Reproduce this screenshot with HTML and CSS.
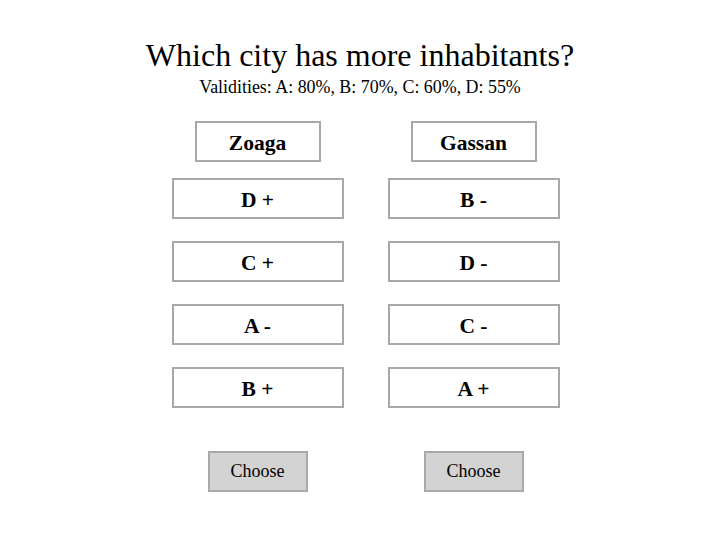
FILE: index.html
```html
<!DOCTYPE html>
<html>
<head>
<meta charset="utf-8">
<link rel="stylesheet" href="styles.css">
</head>
<body>
<div class="page">
  <h1 class="title">Which city has more inhabitants?</h1>
  <p class="subtitle">Validities: A: 80%, B: 70%, C: 60%, D: 55%</p>
  <div class="columns">
    <div class="col">
      <div class="name">Zoaga</div>
      <div class="cues">
        <div class="cue">D +</div>
        <div class="cue">C +</div>
        <div class="cue">A -</div>
        <div class="cue">B +</div>
      </div>
      <button class="choose">Choose</button>
    </div>
    <div class="col">
      <div class="name">Gassan</div>
      <div class="cues">
        <div class="cue">B -</div>
        <div class="cue">D -</div>
        <div class="cue">C -</div>
        <div class="cue">A +</div>
      </div>
      <button class="choose">Choose</button>
    </div>
  </div>
</div>
</body>
</html>
```
FILE: styles.css
```css
html, body {
  margin: 0;
  padding: 0;
  background: #ffffff;
}
body {
  font-family: "Liberation Serif", "Times New Roman", serif;
  color: #000;
}
.page {
  display: flex;
  flex-direction: column;
  align-items: center;
  padding-top: 37px;
}
.title {
  margin: 0;
  font-size: 32px;
  font-weight: normal;
  line-height: 37px;
}
.subtitle {
  margin: 3px 0 0 0;
  font-size: 17.9px;
  line-height: 20px;
}
.columns {
  display: flex;
  gap: 44px;
  padding-left: 11px;
  margin-top: 24px;
}
.col {
  width: 172px;
  display: flex;
  flex-direction: column;
  align-items: center;
}
.name {
  box-sizing: border-box;
  width: 126px;
  height: 41px;
  border: 2px solid #a8a8a8;
  display: flex;
  align-items: center;
  justify-content: center;
  padding-top: 4px;
  font-weight: bold;
  font-size: 21.5px;
}
.cues {
  display: flex;
  flex-direction: column;
  gap: 22.67px;
  margin-top: 16px;
  width: 100%;
}
.cue {
  box-sizing: border-box;
  height: 40.5px;
  border: 2px solid #a8a8a8;
  display: flex;
  align-items: center;
  justify-content: center;
  padding-top: 4px;
  font-weight: bold;
  font-size: 21.5px;
}
.choose {
  box-sizing: border-box;
  margin-top: 43.5px;
  width: 100px;
  height: 41px;
  background: #d3d3d3;
  border: 2px solid #a9a9a9;
  font-family: "Liberation Serif", "Times New Roman", serif;
  font-size: 18px;
  color: #000;
  padding: 0;
}
```
